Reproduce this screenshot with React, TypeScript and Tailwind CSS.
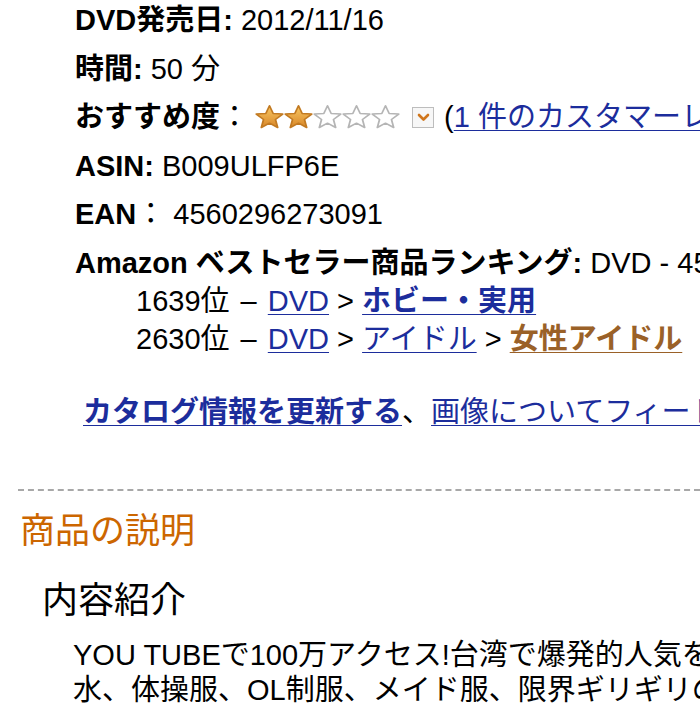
import React from 'react';

const font = "font-['Liberation_Sans','Noto_Sans_CJK_JP',sans-serif]";

const Star: React.FC<{ filled?: boolean }> = ({ filled }) => (
  <svg width="29" height="24" viewBox="2 0 25 24" preserveAspectRatio="none" className="block shrink-0">
    <defs>
      <linearGradient id="gold" x1="0" y1="0" x2="0" y2="1">
        <stop offset="0%" stopColor="#f8c863" />
        <stop offset="100%" stopColor="#d88628" />
      </linearGradient>
    </defs>
    <path
      d="M14.5 0.8L17.67 8.43 25.91 9.09 19.64 14.47 21.55 22.51 14.5 18.2 7.45 22.51 9.36 14.47 3.09 9.09 11.33 8.43Z"
      fill={filled ? 'url(#gold)' : '#ffffff'}
      stroke={filled ? '#c27a22' : '#b5b5b5'}
      strokeWidth="1.5"
      strokeLinejoin="round"
    />
  </svg>
);

const Link: React.FC<{ children: React.ReactNode; className?: string }> = ({ children, className = '' }) => (
  <a href="#" className={`text-[#1c2d9c] underline decoration-1 underline-offset-[3px] ${className}`}>
    {children}
  </a>
);

const Row: React.FC<{ children: React.ReactNode }> = ({ children }) => (
  <li className="leading-[38px] whitespace-nowrap flex items-center [&>*]:shrink-0">{children}</li>
);

export default function App() {
  return (
    <div className={`w-[700px] h-[720px] overflow-hidden bg-white text-black ${font}`}>
      <ul className="pl-[75px] pt-px flex flex-col gap-[10.6px] text-[29px]">
        <Row>
          <b>DVD発売日:</b>&nbsp;2012/11/16
        </Row>
        <Row>
          <b>時間:</b>&nbsp;50 分
        </Row>
        <Row>
          <b>おすすめ度</b>
          <span>：</span>
          <span className="ml-[6px] flex">
            <Star filled />
            <Star filled />
            <Star />
            <Star />
            <Star />
          </span>
          <span className="ml-[12px] w-[22px] h-[21px] border border-[#bdbdbd] bg-[#f7f7f7] flex items-center justify-center">
            <svg width="13" height="9" viewBox="0 0 13 9">
              <path d="M2 2l4.5 4.5L11 2" fill="none" stroke="#d0761c" strokeWidth="2.6" strokeLinecap="round" strokeLinejoin="round" />
            </svg>
          </span>
          <span className="ml-[10px]">(</span>
          <Link>1 件のカスタマーレビュー</Link>
          <span>)</span>
        </Row>
        <Row>
          <b>ASIN:</b>&nbsp;B009ULFP6E
        </Row>
        <Row>
          <b>EAN</b>：&nbsp;4560296273091
        </Row>
        <li className="leading-[38px] whitespace-nowrap">
          <div>
            <b>Amazon ベストセラー商品ランキング:</b> DVD - 45,361位 (DVDの売れ筋ランキングを見る)
          </div>
          <ul className="pl-[61px]">
            <li>
              1639位 <span className="mx-[3px]">–</span> <Link>DVD</Link> &gt; <Link className="font-bold">ホビー・実用</Link>
            </li>
            <li>
              2630位 <span className="mx-[3px]">–</span> <Link>DVD</Link> &gt; <Link>アイドル</Link> &gt;{' '}
              <Link className="font-bold !text-[#9a6128]">女性アイドル</Link>
            </li>
          </ul>
        </li>
      </ul>

      <div className="pl-[83px] mt-[35px] leading-[38px] text-[29px] whitespace-nowrap">
        <Link className="font-bold">カタログ情報を更新する</Link>、<Link>画像についてフィードバックを提供する</Link>
      </div>

      <div className="ml-[18px] mt-[58px] border-t-2 border-dashed border-[#a8a8a8]" />

      <h2 className="pl-[20px] mt-[18px] text-[35px] leading-[44px] text-[#cc6600] font-normal">商品の説明</h2>

      <h3 className="pl-[42px] mt-[26px] text-[36px] leading-[44px] font-normal">内容紹介</h3>

      <div className="pl-[73px] mt-[15px] text-[29px] leading-[35px] whitespace-nowrap">
        <div>YOU TUBEで100万アクセス!台湾で爆発的人気を誇るグラビアアイドル</div>
        <div>水、体操服、OL制服、メイド服、限界ギリギリの衣装で</div>
      </div>
    </div>
  );
}
